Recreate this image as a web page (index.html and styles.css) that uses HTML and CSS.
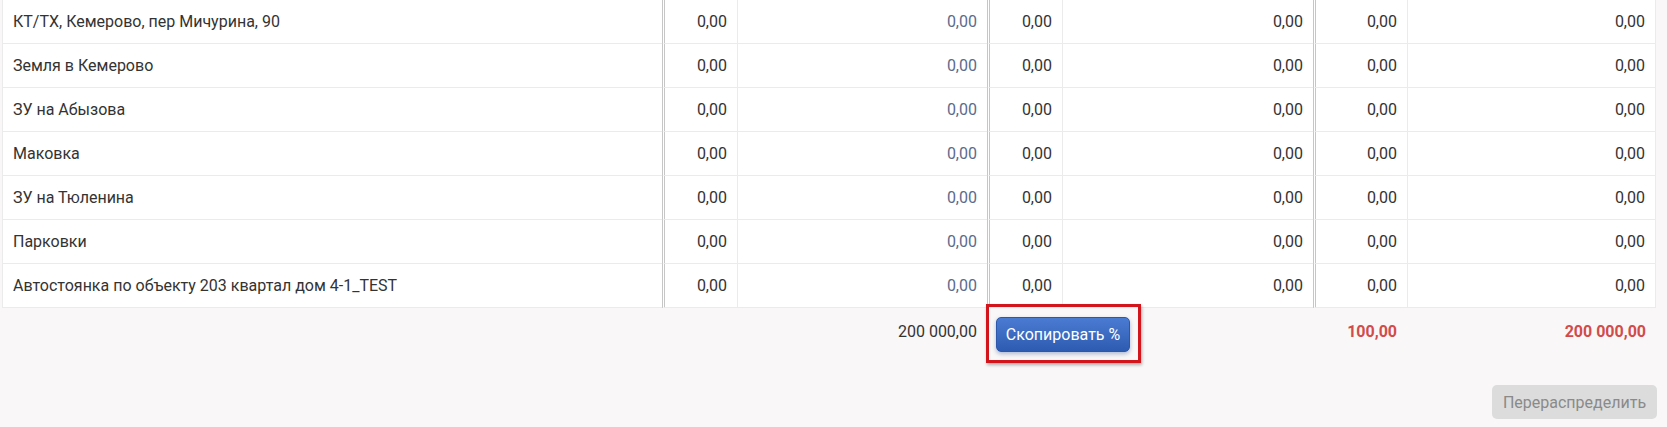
FILE: index.html
```html
<!DOCTYPE html>
<html lang="ru">
<head>
  <meta charset="UTF-8" />
  <title>Распределение</title>
  <link rel="stylesheet" href="styles.css">
</head>
<body>
  <div class="wrap">
    <table class="grid">
      <colgroup>
        <col class="c-name">
        <col class="c-pct">
        <col class="c-sum">
        <col class="c-pct">
        <col class="c-sum2">
        <col class="c-pct2">
        <col class="c-sum3">
      </colgroup>
      <tbody>
        <tr>
          <td class="name">КТ/ТХ, Кемерово, пер Мичурина, 90</td>
          <td class="num grp">0,00</td>
          <td class="num sep link">0,00</td>
          <td class="num grp">0,00</td>
          <td class="num sep">0,00</td>
          <td class="num grp">0,00</td>
          <td class="num sep">0,00</td>
        </tr>
        <tr>
          <td class="name">Земля в Кемерово</td>
          <td class="num grp">0,00</td>
          <td class="num sep link">0,00</td>
          <td class="num grp">0,00</td>
          <td class="num sep">0,00</td>
          <td class="num grp">0,00</td>
          <td class="num sep">0,00</td>
        </tr>
        <tr>
          <td class="name">ЗУ на Абызова</td>
          <td class="num grp">0,00</td>
          <td class="num sep link">0,00</td>
          <td class="num grp">0,00</td>
          <td class="num sep">0,00</td>
          <td class="num grp">0,00</td>
          <td class="num sep">0,00</td>
        </tr>
        <tr>
          <td class="name">Маковка</td>
          <td class="num grp">0,00</td>
          <td class="num sep link">0,00</td>
          <td class="num grp">0,00</td>
          <td class="num sep">0,00</td>
          <td class="num grp">0,00</td>
          <td class="num sep">0,00</td>
        </tr>
        <tr>
          <td class="name">ЗУ на Тюленина</td>
          <td class="num grp">0,00</td>
          <td class="num sep link">0,00</td>
          <td class="num grp">0,00</td>
          <td class="num sep">0,00</td>
          <td class="num grp">0,00</td>
          <td class="num sep">0,00</td>
        </tr>
        <tr>
          <td class="name">Парковки</td>
          <td class="num grp">0,00</td>
          <td class="num sep link">0,00</td>
          <td class="num grp">0,00</td>
          <td class="num sep">0,00</td>
          <td class="num grp">0,00</td>
          <td class="num sep">0,00</td>
        </tr>
        <tr>
          <td class="name">Автостоянка по объекту 203 квартал дом 4-1_TEST</td>
          <td class="num grp">0,00</td>
          <td class="num sep link">0,00</td>
          <td class="num grp">0,00</td>
          <td class="num sep">0,00</td>
          <td class="num grp">0,00</td>
          <td class="num sep">0,00</td>
        </tr>
      </tbody>
      <tfoot>
        <tr>
          <td></td>
          <td></td>
          <td class="num">200 000,00</td>
          <td colspan="2" class="actions">
            <span class="highlight">
              <button class="btn btn-primary" type="button">Скопировать %</button>
            </span>
          </td>
          <td class="num total">100,00</td>
          <td class="num total">200 000,00</td>
        </tr>
      </tfoot>
    </table>

    <div class="bottom">
      <button class="btn btn-disabled" type="button" disabled>Перераспределить</button>
    </div>
  </div>
</body>
</html>
```

FILE: styles.css
```css
* {
  box-sizing: border-box;
}

body {
  margin: 0;
  background: #f9f7f7;
  font-family: Roboto, "Noto Sans", sans-serif;
  font-size: 16px;
  color: #333;
}

.wrap {
  padding: 0 11px 0 2px;
}

.grid {
  width: 1654px;
  table-layout: fixed;
  border-collapse: separate;
  border-spacing: 0;
}

.c-name { width: 660px; }
.c-pct { width: 75px; }
.c-sum { width: 250px; }
.c-sum2 { width: 251px; }
.c-pct2 { width: 94px; }
.c-sum3 { width: 249px; }

.grid tbody td {
  height: 44px;
  background: #fff;
  border-bottom: 1px solid #ebebeb;
  padding: 0 10px;
  vertical-align: middle;
  white-space: nowrap;
}

.grid tbody td.name {
  border-left: 1px solid #ebebeb;
}

.grid tbody td.grp {
  border-left: 3px double #c6c6c6;
}

.grid tbody td.sep {
  border-left: 1px solid #ebebeb;
}

.grid tbody td:last-child {
  border-right: 1px solid #ebebeb;
}

.num {
  text-align: right;
}

.link {
  color: #5a6b8e;
}

.grid tfoot td {
  padding: 14px 10px 0;
  vertical-align: top;
  white-space: nowrap;
}

.grid tfoot td.actions {
  padding: 9px 0 0 9px;
}

.total {
  color: #d24b4b;
  font-weight: 700;
}

.highlight {
  position: relative;
  display: inline-block;
}

.highlight::after {
  content: "";
  position: absolute;
  top: -13px;
  right: -11px;
  bottom: -11px;
  left: -10px;
  border: 3px solid #d2151c;
  box-shadow: 1px 2px 3px rgba(0, 0, 0, 0.3);
  pointer-events: none;
}

.btn {
  font-family: Roboto, "Noto Sans", sans-serif;
  font-size: 16px;
  border-radius: 5px;
  cursor: pointer;
}

.btn-primary {
  display: block;
  width: 134px;
  height: 35px;
  padding: 0;
  color: #fff;
  border: 1px solid #2c57aa;
  background: linear-gradient(#4a7bd2, #2e5bb2);
  box-shadow: 0 2px 4px rgba(40, 70, 140, 0.35);
}

.bottom {
  display: flex;
  justify-content: flex-end;
  margin-top: 33px;
  margin-right: -1px;
}

.btn-disabled {
  width: 165px;
  height: 34px;
  padding: 0;
  color: #8a8a8a;
  background: #dcdcdc;
  border: none;
  cursor: default;
}
```
